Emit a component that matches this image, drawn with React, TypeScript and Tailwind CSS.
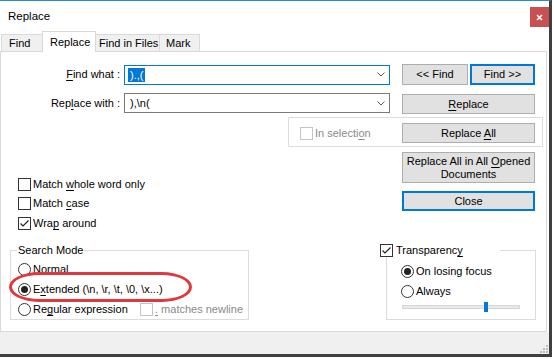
import React from 'react';

function U({ children }: { children: React.ReactNode }) {
    return <span className="underline decoration-1 underline-offset-2">{children}</span>;
}

function CheckBox({ checked = false, disabled = false }: { checked?: boolean; disabled?: boolean }) {
    return (
        <span
            className={`flex h-[13px] w-[13px] shrink-0 items-center justify-center border bg-white ${
                disabled ? 'border-[#c4c4c4]' : 'border-[#333333]'
            }`}
        >
            {checked && (
                <svg width="11" height="11" viewBox="0 0 11 11">
                    <path d="M1.5 5.5 L4 8 L9.5 2.5" fill="none" stroke="#222" strokeWidth="1.2" />
                </svg>
            )}
        </span>
    );
}

function Radio({ checked = false }: { checked?: boolean }) {
    return (
        <span className="flex h-[13px] w-[13px] shrink-0 items-center justify-center rounded-full border border-[#333333] bg-white">
            {checked && <span className="h-[7px] w-[7px] rounded-full bg-[#222]" />}
        </span>
    );
}

function Btn({ children, def = false, className = '' }: { children: React.ReactNode; def?: boolean; className?: string }) {
    return (
        <div
            className={`flex shrink-0 items-center justify-center bg-[#e1e1e1] text-center leading-[13px] ${
                def ? 'border-2 border-[#0078d7]' : 'border border-[#adadad]'
            } ${className}`}
        >
            {children}
        </div>
    );
}

function Chevron() {
    return (
        <svg className="ml-auto mr-[4px]" width="8" height="5" viewBox="0 0 8 5">
            <polyline points="0.5,0.5 4,4 7.5,0.5" fill="none" stroke="#5a5a5a" strokeWidth="1" />
        </svg>
    );
}

export default function App() {
    return (
        <div className="relative h-[359px] w-[554px] bg-white font-['Liberation_Sans',Arial,sans-serif] text-[11px] leading-[13px] text-black">
            {/* Fenêtre */}
            <div className="flex h-[357px] w-[552px] flex-col border-t border-r-[3px] border-b-[3px] border-t-[#2b88d8] border-r-[#3f3f3f] border-b-[#3f3f3f]">
                {/* Barre de titre */}
                <div className="flex h-[30px] shrink-0 items-center">
                    <span className="pl-[8px] text-[11.5px]">Replace</span>
                    <div className="ml-auto flex h-[20px] w-[19px] items-center justify-center self-start mt-[6px] bg-[#c75050]">
                        <svg width="7" height="7" viewBox="0 0 7 7">
                            <path d="M1 1 L6 6 M6 1 L1 6" stroke="white" strokeWidth="1.6" />
                        </svg>
                    </div>
                </div>

                {/* Onglets */}
                <div className="flex h-[20px] shrink-0 items-end pl-[1px]">
                    <div className="flex h-[17px] w-[41px] items-center border-t border-l border-[#d9d9d9] bg-[#f0f0f0] pl-[7px]">Find</div>
                    <div className="relative z-10 -mb-px flex h-[21px] w-[54px] items-center border-x border-t border-[#d9d9d9] bg-white pl-[7px]">Replace</div>
                    <div className="flex h-[17px] w-[64px] items-center border-t border-r border-[#d9d9d9] bg-[#f0f0f0] pl-[3px]">Find in Files</div>
                    <div className="flex h-[17px] w-[40px] items-center border-t border-r border-[#d9d9d9] bg-[#f0f0f0] pl-[6px]">Mark</div>
                </div>

                {/* Panneau */}
                <div className="flex h-[281px] w-[547px] shrink-0 flex-col border border-[#d9d9d9] bg-white">
                    {/* Find what */}
                    <div className="mt-[12px] flex items-center">
                        <div className="w-[119px] text-right">
                            <U>F</U>ind what :
                        </div>
                        <div className="ml-[4px] flex h-[20px] w-[266px] items-center border border-[#0078d7] bg-white pl-[3px]">
                            <span className="h-[14px] bg-[#0078d7] px-[2px] leading-[14px] text-white">).,(</span>
                            <Chevron />
                        </div>
                        <Btn className="ml-[12px] h-[21px] w-[66px]">&lt;&lt; Find</Btn>
                        <Btn def className="ml-[2px] h-[21px] w-[65px]">Find &gt;&gt;</Btn>
                    </div>

                    {/* Replace with */}
                    <div className="mt-[8px] flex items-start">
                        <div className="flex h-[20px] w-[119px] items-center justify-end">
                            Rep<U>l</U>ace with :
                        </div>
                        <div className="ml-[4px] flex h-[20px] w-[266px] items-center border border-[#7a7a7a] bg-white pl-[5px]">
                            <span>),\n(</span>
                            <Chevron />
                        </div>
                        <Btn className="ml-[12px] mt-[1px] h-[20px] w-[133px]">
                            <span>
                                <U>R</U>eplace
                            </span>
                        </Btn>
                    </div>

                    {/* In selection */}
                    <div className="mt-[3px] ml-[287px] flex h-[30px] w-[255px] items-start border border-[#dcdcdc]">
                        <div className="mt-[9px] flex w-[113px] items-center pl-[11px]">
                            <CheckBox disabled />
                            <span className="ml-[2px] text-[#8a8a8a]">
                                In selecti<U>o</U>n
                            </span>
                        </div>
                        <Btn className="mt-[5px] h-[20px] w-[133px]">
                            <span>
                                Replace <U>A</U>ll
                            </span>
                        </Btn>
                    </div>

                    {/* Options + boutons */}
                    <div className="mt-[5px] flex">
                        <div className="flex w-[401px] flex-col pl-[17px] pt-[26px]">
                            <div className="flex h-[13px] items-center gap-[2px]">
                                <CheckBox />
                                <span>
                                    Match <U>w</U>hole word only
                                </span>
                            </div>
                            <div className="mt-[6px] flex h-[13px] items-center gap-[2px]">
                                <CheckBox />
                                <span>
                                    Match <U>c</U>ase
                                </span>
                            </div>
                            <div className="mt-[7px] flex h-[13px] items-center gap-[2px]">
                                <CheckBox checked />
                                <span>
                                    Wra<U>p</U> around
                                </span>
                            </div>
                        </div>
                        <div className="flex w-[133px] flex-col">
                            <Btn className="h-[31px] w-[133px]">
                                <span>
                                    Replace All in All <U>O</U>pened
                                    <br />
                                    Documents
                                </span>
                            </Btn>
                            <Btn def className="mt-[8px] h-[20px] w-[133px]">
                                Close
                            </Btn>
                        </div>
                    </div>

                    {/* Groupes du bas */}
                    <div className="mt-[20px] flex">
                        <div className="relative ml-[9px] h-[70px] w-[239px] border border-[#dcdcdc]">
                            <span className="absolute top-[-7px] left-[6px] bg-white px-[1px]">Search Mode</span>
                            <div className="flex flex-col gap-[7px] pt-[12px] pl-[7px]">
                                <div className="flex h-[13px] items-center gap-[2px]">
                                    <Radio />
                                    <span>Normal</span>
                                </div>
                                <div className="flex h-[13px] items-center gap-[2px]">
                                    <Radio checked />
                                    <span>
                                        E<U>x</U>tended (\n, \r, \t, \0, \x...)
                                    </span>
                                </div>
                                <div className="flex h-[13px] items-center">
                                    <Radio />
                                    <span className="ml-[2px] w-[107px]">
                                        Re<U>g</U>ular expression
                                    </span>
                                    <CheckBox disabled />
                                    <span className="ml-[2px] text-[#8a8a8a]">
                                        <U>.</U> matches newline
                                    </span>
                                </div>
                            </div>
                        </div>

                        <div className="relative ml-[137px] h-[70px] w-[150px] border border-[#dcdcdc]">
                            <div className="absolute top-[-7px] left-[-7px] flex w-[120px] items-center bg-white">
                                <CheckBox checked />
                                <span className="ml-[3px]">
                                    Transparenc<U>y</U>
                                </span>
                            </div>
                            <div className="flex flex-col pt-[14px] pl-[14px]">
                                <div className="flex h-[13px] items-center gap-[2px]">
                                    <Radio checked />
                                    <span>On losing focus</span>
                                </div>
                                <div className="mt-[7px] flex h-[13px] items-center gap-[2px]">
                                    <Radio />
                                    <span>Always</span>
                                </div>
                                <div className="relative mt-[7px] ml-[1px] h-[4px] w-[118px] border border-[#d6d6d6] bg-[#e7eaea]">
                                    <div className="absolute top-[-4px] left-[81px] h-[10px] w-[4px] bg-[#0078d7]" />
                                </div>
                            </div>
                        </div>
                    </div>
                </div>

                {/* Barre d'état */}
                <div className="flex h-[22px] w-[549px] shrink-0 items-end justify-end bg-[#f0f0f0] pr-[1px] pb-[1px]">
                    <svg width="8" height="8" viewBox="0 0 8 8">
                        <rect x="6" y="0" width="2" height="2" fill="#bdbdbd" />
                        <rect x="3" y="3" width="2" height="2" fill="#bdbdbd" />
                        <rect x="6" y="3" width="2" height="2" fill="#bdbdbd" />
                        <rect x="0" y="6" width="2" height="2" fill="#bdbdbd" />
                        <rect x="3" y="6" width="2" height="2" fill="#bdbdbd" />
                        <rect x="6" y="6" width="2" height="2" fill="#bdbdbd" />
                    </svg>
                </div>
            </div>

            {/* Annotation rouge */}
            <div className="pointer-events-none absolute top-[272px] left-[9px] h-[30px] w-[183px] rounded-[30px/15px] border-[3px] border-[#e0383e]" />
        </div>
    );
}
